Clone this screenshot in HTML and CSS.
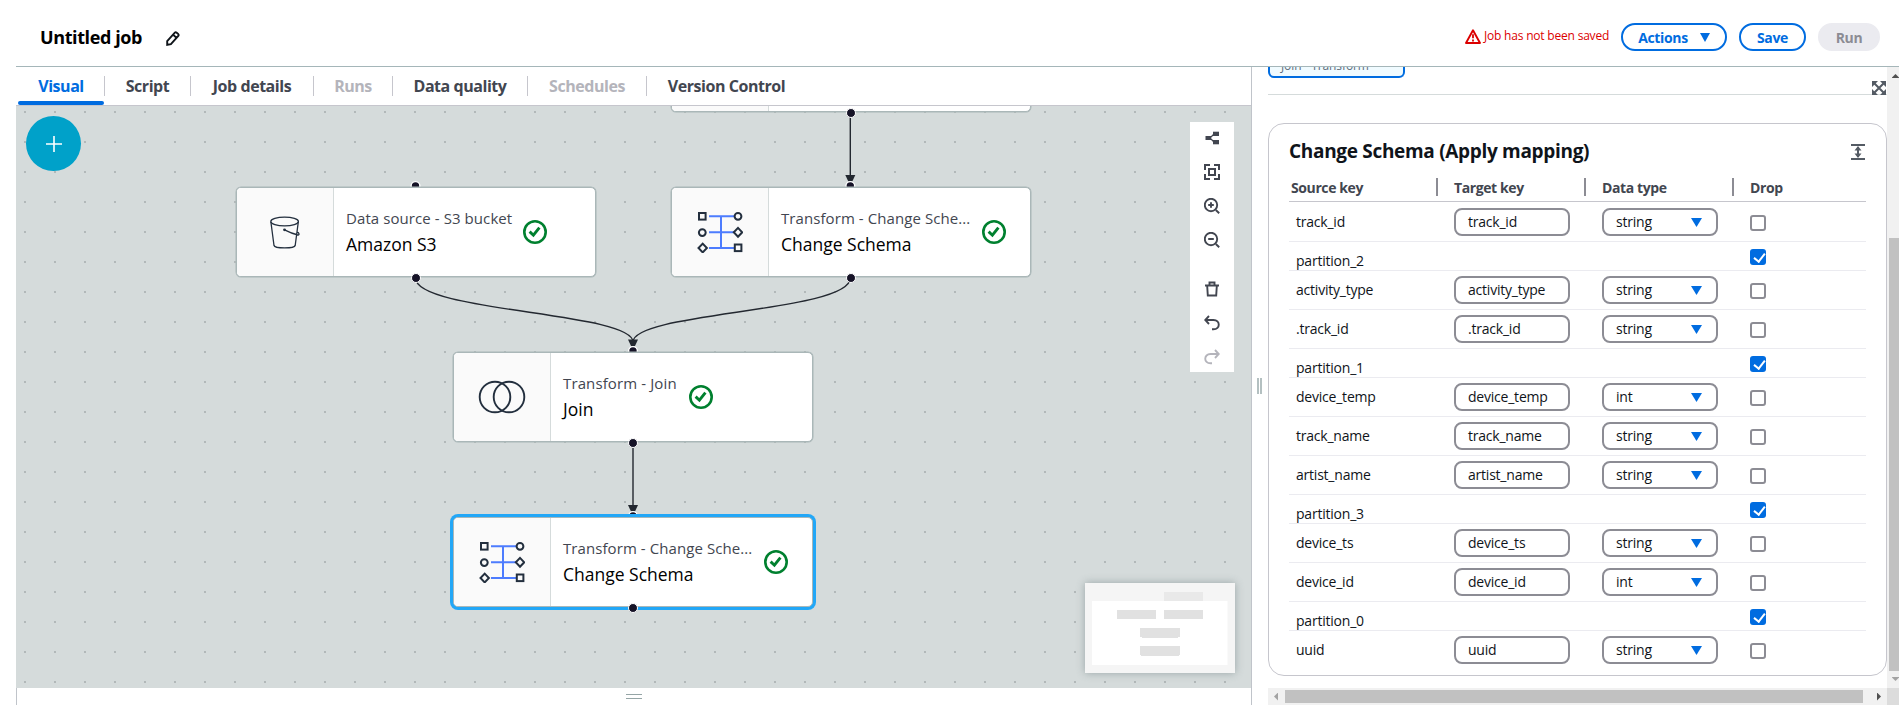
FILE: index.html
```html
<!DOCTYPE html>
<html lang="en">
<head>
<meta charset="utf-8">
<title>Untitled job</title>
<link rel="stylesheet" href="styles.css">
</head>
<body>
<svg class="defs" width="0" height="0" aria-hidden="true">
  <symbol id="check" viewBox="0 0 24 24"><circle cx="12" cy="12" r="10.7" fill="none" stroke="#00802f" stroke-width="2.6"/><path d="M6.600 11.600l3.800 3.600 6-7.600" fill="none" stroke="#00802f" stroke-width="2.900"/></symbol>
  <symbol id="schema" viewBox="0 0 46 42">
    <g fill="none" stroke="#4d7cfe" stroke-width="2"><path d="M12 5.300h25M12 21.300h25M12 37h25M24 5.300v31.700"/></g>
    <g fill="#fafafa" stroke="#232f3e" stroke-width="2"><rect x="2" y="2" width="6.600" height="6.600"/><circle cx="5.300" cy="21.600" r="3.400"/><path d="M5.700 32.600l4.200 4.400-4.200 4.400-4.200-4.400z"/><circle cx="41" cy="5.300" r="3.400"/><path d="M41 16.900l4.200 4.400-4.200 4.400-4.200-4.400z"/><rect x="37.800" y="33.500" width="6.600" height="6.600"/></g>
  </symbol>
</svg>
<div class="app">
  <header class="header">
    <h1 class="job-title">Untitled job</h1>
    <svg class="pencil" width="14" height="15" viewBox="0 0 14 15"><path d="M1.200 13.800V10L8.600 1.900q1-1 2.100-.2l1.400 1.200q1 1 .2 2.100L4.900 13.200z M7.200 3.700l3.600 3.400" fill="none" stroke="#0f141a" stroke-width="1.900"/></svg>
    <div class="unsaved">
      <svg width="16" height="15" viewBox="0 0 16 15"><path d="M8 1.300L15 14H1z" fill="none" stroke="#db0000" stroke-width="1.900" stroke-linejoin="round"/><path d="M8 5.300v4M8 10.600v1.800" stroke="#db0000" stroke-width="1.800"/></svg>
      <span>Job has not been saved</span>
    </div>
    <button class="btn btn-actions">Actions<svg width="10" height="9" viewBox="0 0 10 9"><path d="M0 0h10L5 9z" fill="#006ce0"/></svg></button>
    <button class="btn btn-save">Save</button>
    <button class="btn btn-run" disabled>Run</button>
  </header>
  <div class="main">
    <section class="editor">
      <nav class="tabs">
        <a class="tab active t-visual">Visual</a>
        <a class="tab t-script">Script</a>
        <a class="tab t-details">Job details</a>
        <a class="tab disabled t-runs">Runs</a>
        <a class="tab t-quality">Data quality</a>
        <a class="tab disabled t-schedules">Schedules</a>
        <a class="tab t-version">Version Control</a>
      </nav>
      <div class="canvas">
        <svg class="edges" width="1235" height="582" viewBox="16 106 1235 582">
          <g fill="none" stroke="#232830" stroke-width="1.400">
            <path d="M850.300 113V176"/>
            <path d="M415.500 278C415.500 312 633 312 633 342"/>
            <path d="M850.300 278C850.300 312 633 312 633 342"/>
            <path d="M633 443V506"/>
          </g>
          <g fill="#232830"><path d="M845.300 175h10l-3 6.500h-4z"/><path d="M628 339.500h10l-3 6.500h-4z"/><path d="M628 505h10l-3 6.500h-4z"/></g>
          <g fill="#161327" stroke="#fff" stroke-width="1.400"><circle cx="415.500" cy="186" r="4.400"/><circle cx="850.300" cy="186" r="4.400"/><circle cx="633" cy="351" r="4.400"/><circle cx="633" cy="516" r="4.400"/></g>
        </svg>
        <button class="add"><svg width="16" height="16" viewBox="0 0 16 16"><path d="M8 0v16M0 8h16" stroke="#fff" stroke-width="1.600"/></svg></button>
        <article class="node n-top"><div class="node-icon"></div><i class="port"></i></article>
        <article class="node n-s3">
          <div class="node-icon"><svg width="30" height="33" viewBox="0 0 30 33"><g fill="none" stroke="#232f3e" stroke-width="1.300"><ellipse cx="14.600" cy="5.500" rx="13.800" ry="4.300"/><path d="M.9 6l3.100 23.500c.8 3.200 20.400 3.200 21.200 0L28.300 6M14.500 13.800c4 2 8 3.900 13.500 5.200 1.600.2 1.300-2.400-.7-2.800"/></g><circle cx="14.500" cy="13.800" r="1.400" fill="#232f3e"/></svg></div>
          <div class="node-text s3"><p class="kind">Data source - S3 bucket</p><p class="name">Amazon S3</p></div>
          <svg class="ok" width="24" height="24"><use href="#check"/></svg><i class="port"></i>
        </article>
        <article class="node n-schema">
          <div class="node-icon"><svg width="46" height="42"><use href="#schema"/></svg></div>
          <div class="node-text wide"><p class="kind">Transform - Change Sche...</p><p class="name">Change Schema</p></div>
          <svg class="ok" width="24" height="24"><use href="#check"/></svg><i class="port"></i>
        </article>
        <article class="node n-join">
          <div class="node-icon"><svg width="48" height="34" viewBox="0 0 48 34"><g fill="none" stroke="#232f3e" stroke-width="1.900"><circle cx="17" cy="17" r="15.300"/><circle cx="31" cy="17" r="15.300"/></g></svg></div>
          <div class="node-text join"><p class="kind">Transform - Join</p><p class="name">Join</p></div>
          <svg class="ok" width="24" height="24"><use href="#check"/></svg><i class="port"></i>
        </article>
        <article class="node n-selected">
          <div class="node-icon"><svg width="46" height="42"><use href="#schema"/></svg></div>
          <div class="node-text wide"><p class="kind">Transform - Change Sche...</p><p class="name">Change Schema</p></div>
          <svg class="ok" width="24" height="24"><use href="#check"/></svg><i class="port"></i>
        </article>
        <div class="toolbar">
          <svg width="16" height="16" viewBox="0 0 16 16"><g fill="#424650"><rect x="1.500" y="6" width="5.500" height="4"/><rect x="9" y="1.700" width="6" height="4.300"/><rect x="9" y="10" width="6" height="4.300"/></g><path d="M6 8l4-4M6 8l4 4" stroke="#424650" stroke-width="1.200"/></svg>
          <svg width="16" height="16" viewBox="0 0 16 16"><path d="M1 6V1h5M10 1h5v5M15 10v5h-5M6 15H1v-5M5 5h6v6H5z" fill="none" stroke="#424650" stroke-width="2"/></svg>
          <svg width="16" height="16" viewBox="0 0 16 16"><path d="M11.800 12l3.400 3.300M7 4.200v5.600M4.200 7h5.600" stroke="#424650" stroke-width="1.900"/><circle cx="7" cy="7" r="6.200" fill="none" stroke="#424650" stroke-width="1.900"/></svg>
          <svg width="16" height="16" viewBox="0 0 16 16"><path d="M11.800 12l3.400 3.300M4.200 7h5.600" stroke="#424650" stroke-width="1.900"/><circle cx="7" cy="7" r="6.200" fill="none" stroke="#424650" stroke-width="1.900"/></svg>
          <svg class="apart" width="16" height="16" viewBox="0 0 16 16"><path d="M1 4.500h14M5.500 4.500v-3h5v3M3.200 5l.6 9.500h8.400l.6-9.500" fill="none" stroke="#424650" stroke-width="1.900"/></svg>
          <svg width="16" height="16" viewBox="0 0 16 16"><path d="M5 1L1.200 5 5 9M1.200 5h8.300c7 0 7 9.300 0 9.300H8" fill="none" stroke="#424650" stroke-width="1.900"/></svg>
          <svg width="16" height="16" viewBox="0 0 16 16"><path d="M11 1l3.800 4L11 9M14.800 5H6.500c-7 0-7 9.300 0 9.300H8" fill="none" stroke="#b4b4bb" stroke-width="1.900"/></svg>
        </div>
        <div class="minimap">
          <svg width="150" height="90" viewBox="0 0 150 90"><path d="M7 18h135.500v64H7z" fill="#fff"/><path d="M79 9h39v9H79z" fill="#e9e9e9"/><path d="M32 27h39v9H32zM79 27h39v9H79zM55 45h40v9h-2v1H57v-1h-2zM55 63h40v9h-1v1H56v-1h-1z" fill="#e1e1e1"/></svg>
        </div>
      </div>
      <div class="drawer"><i class="grip-h"></i></div>
    </section>
    <aside class="panel">
      <div class="gutter"><i class="grip-v"></i></div>
      <div class="content">
        <div class="chip"><span>Join - Transform</span></div>
        <div class="rule"><svg width="14" height="14" viewBox="0 0 14 14"><g fill="#545b64"><path d="M0 0h6L0 6zM14 0v6L8 0zM0 14V8l6 6zM14 14H8l6-6z"/></g><path d="M2 2l10 10M12 2L2 12" stroke="#545b64" stroke-width="2"/></svg></div>
        <section class="card">
          <div class="card-head"><h2>Change Schema (Apply mapping)</h2><svg width="14" height="16" viewBox="0 0 14 16"><path d="M0 1h14M0 15h14M7 3v10" stroke="#545b64" stroke-width="2"/><path d="M7 2l3.500 4.500h-7zM7 14l3.500-4.500h-7z" fill="#545b64"/></svg></div>
          <div class="row head"><b>Source key</b><b>Target key</b><b>Data type</b><b>Drop</b></div>
          <div class="row first"><span class="src">track_id</span><span class="field">track_id</span><span class="field select">string</span><i class="box"></i></div>
          <div class="row dropped"><span class="src">partition_2</span><i class="box on"></i></div>
          <div class="row"><span class="src">activity_type</span><span class="field">activity_type</span><span class="field select">string</span><i class="box"></i></div>
          <div class="row"><span class="src">.track_id</span><span class="field">.track_id</span><span class="field select">string</span><i class="box"></i></div>
          <div class="row dropped"><span class="src">partition_1</span><i class="box on"></i></div>
          <div class="row"><span class="src">device_temp</span><span class="field">device_temp</span><span class="field select">int</span><i class="box"></i></div>
          <div class="row"><span class="src">track_name</span><span class="field">track_name</span><span class="field select">string</span><i class="box"></i></div>
          <div class="row"><span class="src">artist_name</span><span class="field">artist_name</span><span class="field select">string</span><i class="box"></i></div>
          <div class="row dropped"><span class="src">partition_3</span><i class="box on"></i></div>
          <div class="row"><span class="src">device_ts</span><span class="field">device_ts</span><span class="field select">string</span><i class="box"></i></div>
          <div class="row"><span class="src">device_id</span><span class="field">device_id</span><span class="field select">int</span><i class="box"></i></div>
          <div class="row dropped"><span class="src">partition_0</span><i class="box on"></i></div>
          <div class="row last"><span class="src">uuid</span><span class="field">uuid</span><span class="field select">string</span><i class="box"></i></div>
        </section>
      </div>
      <div class="vscroll"><i class="arrow up"></i><i class="thumb"></i><i class="arrow down"></i></div>
      <div class="hscroll"><i class="arrow left"></i><i class="thumb"></i><i class="arrow right"></i></div>
      <div class="corner"></div>
    </aside>
  </div>
</div>
</body>
</html>
```
FILE: styles.css
```css
* { box-sizing: border-box; }
body { margin: 0; background: #fff; color: #0f141a; font-family: "Open Sans", "Noto Sans", sans-serif; overflow: hidden; }
h1, h2, p { margin: 0; }
button { font-family: inherit; padding: 0; }
svg { display: block; flex: none; }
.defs { position: absolute; }
.app { height: 705px; padding-left: 16px; display: flex; flex-direction: column; }

/* Header */
.header { height: 67px; flex: none; display: flex; align-items: center; padding: 8px 19px 0 24px; border-bottom: 1px solid #a5b6b9; }
.job-title { width: 102px; font-size: 18px; line-height: 24px; font-weight: 700; letter-spacing: -0.4px; white-space: nowrap; color: #000; }
.pencil { margin: 2px auto 0 24px; }
.unsaved { display: flex; align-items: center; gap: 3px; width: 156px; color: #db0000; font-size: 12px; line-height: 16px; letter-spacing: -0.2px; white-space: nowrap; }
.unsaved svg { margin-top: -1px; }
.unsaved span { margin-top: -3px; }
.btn { height: 28px; display: flex; align-items: center; justify-content: center; border: 2px solid #006ce0; border-radius: 14px; background: #fff; color: #006ce0; font-size: 14px; font-weight: 700; letter-spacing: -0.35px; }
.btn + .btn { margin-left: 12px; }
.btn-actions { width: 106px; gap: 12px; }
.btn-save { width: 67px; }
.btn-run { width: 62px; border-color: #ebebf0; background: #ebebf0; color: #8c8c94; }

.main { flex: 1; min-height: 0; display: flex; }
.editor { width: 1236px; border-right: 1px solid #c0c4ca; display: flex; flex-direction: column; }

/* Tabs */
.tabs { height: 39px; flex: none; display: flex; align-items: center; padding-left: 2px; border-bottom: 1px solid #c6c6cd; }
.tab { height: 20px; display: flex; align-items: center; justify-content: center; border-right: 1px solid #c6c6cd; color: #424650; font-size: 16px; font-weight: 700; letter-spacing: -0.45px; white-space: nowrap; }
.tab:last-child { border-right: 0; }
.tab.disabled { color: #b4b4bb; }
.tab.active { position: relative; color: #006ce0; }
.tab.active::after { content: ""; position: absolute; left: 0; right: 0; bottom: -9px; height: 4px; border-radius: 2px; background: #006ce0; }
.t-visual { width: 87px; }
.t-script { width: 86px; }
.t-details { width: 123px; }
.t-runs { width: 79px; }
.t-quality { width: 135px; }
.t-schedules { width: 119px; }
.t-version { width: 159px; }

/* Graph canvas */
.canvas { position: relative; height: 582px; flex: none; overflow: hidden; background: radial-gradient(circle at 15px 15px, #a3abac 0.5px, transparent 1.2px) -6px -9px / 30px 30px #d5dbdb; }
.edges { position: absolute; left: 0; top: 0; }
.add { position: absolute; left: 10px; top: 10px; width: 55px; height: 55px; border: 0; border-radius: 50%; background: #00a1c9; display: flex; align-items: center; justify-content: center; }
.node { position: absolute; width: 360px; height: 90px; display: flex; align-items: center; border: 1px solid #aab7b8; border-radius: 5px; background: #fff; box-shadow: 0 0 0 0.5px #aab7b8; }
.node-icon { width: 97px; height: 100%; flex: none; display: flex; align-items: center; justify-content: center; border-right: 1px solid #d5dbdb; border-radius: 4px 0 0 4px; background: #fafafa; }
.node-text { margin: -1px 12px 0; white-space: nowrap; }
.node-text.wide { width: 189px; }
.node-text.s3 { width: 165px; }
.node-text.join { width: 114px; }
.kind { color: #424650; font-size: 15px; line-height: 24px; letter-spacing: 0.08px; }
.join .kind { letter-spacing: 0.12px; }
.name { color: #000; font-size: 17.500px; line-height: 28px; }
.port { position: absolute; left: 174px; bottom: -7px; width: 10px; height: 10px; border: 1px solid #fff; border-radius: 50%; background: #161327; }
.n-top { left: 655px; top: -84px; }
.n-s3 { left: 220px; top: 81px; }
.n-schema { left: 655px; top: 81px; }
.n-join { left: 437px; top: 246px; }
.n-selected { left: 437px; top: 411px; box-shadow: 0 0 0 3px #22a7f7; }

.toolbar { position: absolute; left: 1174px; top: 16px; width: 44px; height: 250px; padding-top: 8px; display: flex; flex-direction: column; align-items: center; gap: 18px; background: #fff; }
.toolbar .apart { margin-top: 15px; }
.minimap { position: absolute; left: 1069px; top: 477px; width: 150px; height: 90px; background: #f5f5f5; box-shadow: 0 0 8px rgba(80, 100, 105, 0.45); }

.drawer { flex: 1; padding: 6px 0 0 609px; border-left: 1px solid #c0c4ca; }
.grip-h { display: block; width: 16px; height: 5px; border-top: 1px solid #95a5a6; border-bottom: 1px solid #95a5a6; }

/* Properties panel */
.panel { flex: 1; display: grid; grid-template-columns: 16px 619px 12px; grid-template-rows: 621px 17px; }
.gutter { grid-row: 1 / 3; padding: 311px 0 0 5px; }
.grip-v { display: block; width: 5px; height: 16px; border-left: 2px solid #b4c0c1; border-right: 2px solid #b4c0c1; }
.content { overflow: hidden; }
.chip { width: 137px; height: 11px; display: flex; flex-direction: column; justify-content: flex-end; padding: 0 0 2px 11px; overflow: hidden; border: 2px solid #006ce0; border-top: 0; border-radius: 0 0 6px 6px; background: #f0fbff; color: #5f6b7a; font-size: 12px; line-height: 16px; letter-spacing: -0.1px; }
.rule { height: 17px; padding-top: 3px; display: flex; justify-content: flex-end; padding-right: 1px; border-bottom: 1px solid #d5dbdb; }
.card { height: 553px; margin-top: 28px; padding: 0 20px; border: 1px solid #c6c6cd; border-radius: 16px; }
.card-head { height: 54px; display: flex; align-items: center; justify-content: space-between; }
.card-head svg { margin: 2px 1px 0 0; }
h2 { font-size: 19px; line-height: 24px; letter-spacing: -0.31px; }
.row { height: 39px; display: grid; grid-template-columns: 165px 148px 148px 1fr; align-items: start; padding-top: 5px; border-bottom: 1px solid #ebebf0; font-size: 14px; line-height: 20px; letter-spacing: -0.22px; }
.row.first { height: 40px; padding-top: 6px; }
.row.last { border-bottom: 0; }
.row.head { height: 24px; grid-template-columns: 149px 148px 148px 1fr; padding: 0; border-color: #c6c6cd; color: #424650; letter-spacing: -0.4px; }
.head b { height: 18px; line-height: 19px; padding-left: 16px; border-right: 2px solid #8c8c94; }
.head b:first-child { padding-left: 2px; }
.head b:last-child { border-right: 0; }
.src { padding: 4px 0 0 7px; }
.field { width: 116px; height: 28px; padding: 2px 12px; border: 2px solid #8c8c94; border-radius: 8px; }
.select { display: flex; justify-content: space-between; }
.select::after { content: ""; width: 11px; height: 9px; margin: 6px 2px 0 0; background: #006ce0; clip-path: polygon(0 0, 100% 0, 50% 100%); }
.box { width: 16px; height: 16px; margin-top: 7px; border: 2px solid #8c8c94; border-radius: 3px; }
.dropped { height: 29px; }
.dropped .box { grid-column: 4; margin-top: 2px; }
.box.on { border: 0; background: #006ce0; overflow: hidden; }
.box.on::after { content: ""; display: block; width: 5px; height: 9px; margin: 2px 0 0 6px; border: solid #fff; border-width: 0 2px 2px 0; transform: rotate(38deg); }

/* Scrollbars */
.vscroll { background: #f1f1f1; overflow: hidden; display: flex; flex-direction: column; padding: 7px 0 7px 2px; }
.vscroll .thumb { height: 433px; margin-top: 160px; background: #c1c1c1; }
.arrow { display: block; width: 8px; height: 4px; margin-left: 2.500px; background: #505050; }
.arrow.up { clip-path: polygon(50% 0, 100% 100%, 0 100%); }
.arrow.down { margin-top: auto; background: #a3a3a3; clip-path: polygon(0 0, 100% 0, 50% 100%); }
.hscroll { grid-column: 2; display: flex; align-items: center; padding: 0 6px; background: #f1f1f1; }
.hscroll .arrow { width: 4px; height: 8px; margin: 0; }
.hscroll .left { background: #a3a3a3; clip-path: polygon(0 50%, 100% 0, 100% 100%); }
.hscroll .right { margin-left: auto; clip-path: polygon(0 0, 100% 50%, 0 100%); }
.hscroll .thumb { width: 578px; height: 13px; margin-left: 7px; background: #c1c1c1; }
.corner { background: #dcdcdc; }
```
